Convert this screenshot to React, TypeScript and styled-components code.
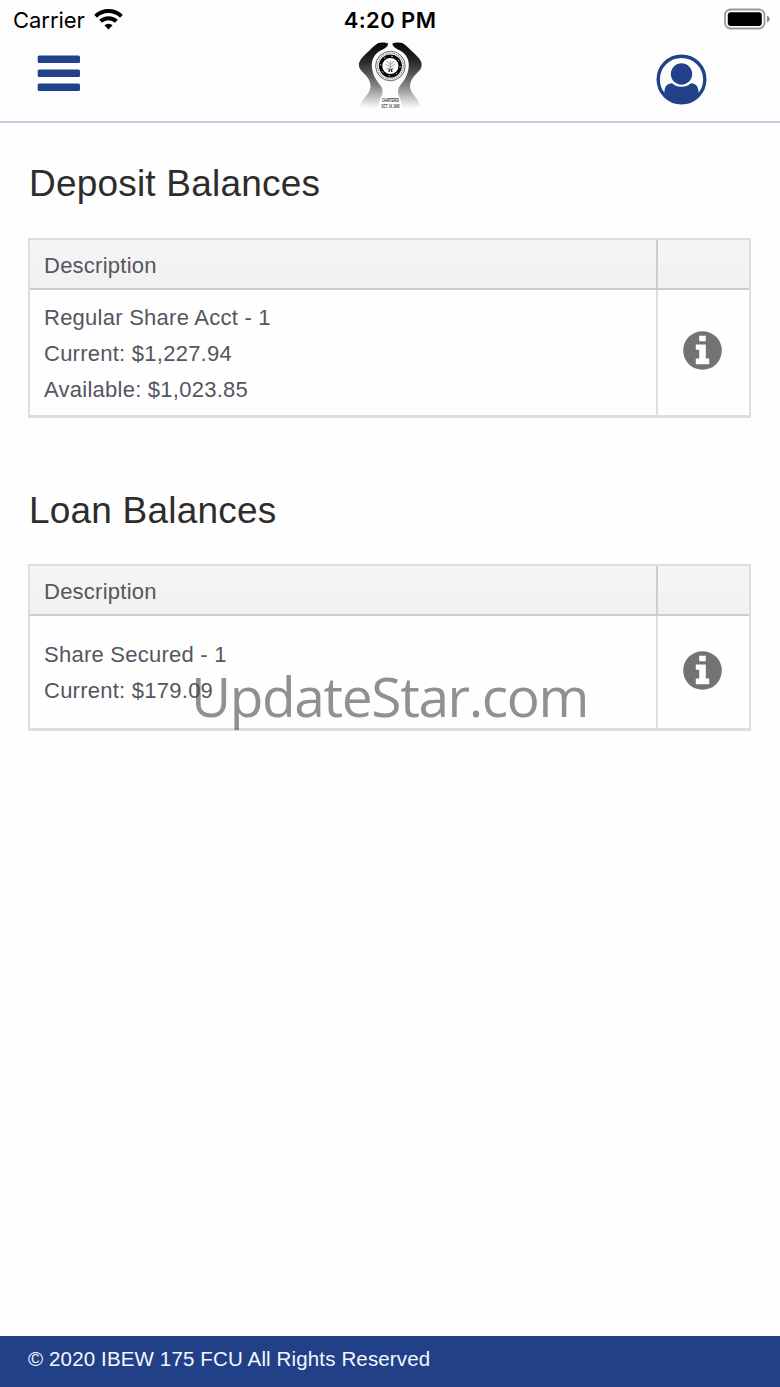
import styled, { createGlobalStyle } from 'styled-components';

const GlobalStyle = createGlobalStyle`
  * {
    box-sizing: border-box;
  }

  body {
    margin: 0;
    background: #fefefe;
    font-family: 'Liberation Sans', Arial, sans-serif;
  }
`;

const Page = styled.div`
  position: relative;
  display: flex;
  flex-direction: column;
  height: 1387px;
  overflow: hidden;
`;

const Header = styled.header`
  height: 123px;
  background: #fdfdfe;
  border-bottom: 2px solid #cbcbe0;
`;

const StatusBar = styled.div`
  display: grid;
  grid-template-columns: 1fr auto 1fr;
  align-items: center;
  height: 40px;
  padding: 0 10px 0 13px;
  font-family: Inter, 'Liberation Sans', sans-serif;
  font-size: 22px;
  color: #000;
`;

const Carrier = styled.div`
  display: flex;
  align-items: center;
  gap: 9px;
  letter-spacing: -0.05px;

  svg {
    margin-top: -2px;
  }
`;

const Time = styled.div`
  margin-right: 3px;
  font-weight: 600;
  letter-spacing: 0.4px;
`;

const BatteryIcon = styled.svg`
  justify-self: end;
  margin-top: -2px;
`;

const NavBar = styled.nav`
  display: grid;
  grid-template-columns: 1fr auto 1fr;
  align-items: start;
  padding: 0 73px 0 37px;
`;

const IconButton = styled.button`
  display: flex;
  padding: 0;
  border: 0;
  background: none;
  color: #214289;
`;

const MenuButton = styled(IconButton)`
  margin-top: 15px;
`;

const ProfileButton = styled(IconButton)`
  justify-self: end;
  margin-top: 14px;
`;

const Logo = styled.svg`
  margin-left: 36px;
`;

const Main = styled.main`
  flex: 1;
  padding: 38px 28px 0;
`;

const Title = styled.h2`
  margin: 0 0 31px;
  padding-left: 1px;
  font-size: 37px;
  font-weight: 400;
  line-height: 46px;
  letter-spacing: 0.2px;
  color: #2d2d2d;
`;

const Section = styled.section`
  height: 327px;

  & + & ${Title} {
    margin-bottom: 30px;
  }
`;

const Table = styled.div`
  width: 723px;
  border: 2px solid #dedede;
  border-bottom-width: 3px;
  font-size: 22px;
  line-height: 36px;
  letter-spacing: 0.25px;
  color: #54565f;
`;

const Row = styled.div`
  display: grid;
  grid-template-columns: 628px 1fr;
`;

const HeadRow = styled(Row)`
  height: 50px;
  background: linear-gradient(#f5f5f5, #f1f1f1);
  border-bottom: 2px solid #cdcdcd;
`;

const Cell = styled.div<{ $top: number; $bottom: number }>`
  padding: ${({ $top, $bottom }) => `${$top}px 14px ${$bottom}px`};
  border-right: 2px solid #dedede;
`;

const HeadCell = styled.div`
  padding: 8px 14px 0;
  border-right: 2px solid #cdcdcd;
`;

const InfoCell = styled.div`
  display: flex;
  align-items: center;
  justify-content: center;
  padding: 0 2px 4px 0;
  color: #737373;
`;

const Watermark = styled.div`
  position: absolute;
  top: 659px;
  left: 191px;
  font-family: 'Open Sans', 'Noto Sans', sans-serif;
  font-size: 55px;
  line-height: 74px;
  letter-spacing: -1.35px;
  white-space: nowrap;
  color: rgba(70, 70, 70, 0.6);
`;

const Footer = styled.footer`
  height: 51px;
  padding: 0 28px;
  background: #224087;
  color: #f4f7ff;
  font-size: 20.5px;
  line-height: 45px;
  letter-spacing: 0.14px;
`;

const WifiIcon = () => (
  <svg width="29" height="22" viewBox="0 0 29 22">
    <g fill="none" stroke="#000" strokeWidth="4">
      <path d="M1.6 8.2a18.6 18.6 0 0 1 25.8 0" />
      <path d="M6.6 13.3a11.5 11.5 0 0 1 15.8 0" />
    </g>
    <path d="M14.5 21.5l-4.1-4.2a6 6 0 0 1 8.2 0z" />
  </svg>
);

const InfoIcon = () => (
  <svg width="39" height="39" viewBox="0 0 39 39">
    <circle cx="19.5" cy="19.5" r="19.3" fill="currentColor" />
    <path d="M16.2 4.8h6.6v5.4h-6.6zM12.8 13.4h10v14.1h3.4v5.7H12.8v-5.7h3.4v-8.8h-3.4z" fill="#fff" />
  </svg>
);

const LogoArt = () => (
  <Logo width="70" height="70" viewBox="0 0 70 70">
    <defs>
      <linearGradient id="fade" x1="0" y1="2" x2="0" y2="68" gradientUnits="userSpaceOnUse">
        <stop offset="0" stopColor="#050505" />
        <stop offset="0.3" stopColor="#2a2a2a" />
        <stop offset="0.65" stopColor="#808080" />
        <stop offset="1" stopColor="#fdfdfe" />
      </linearGradient>
      <path
        id="hand"
        d="M33.3 3.6C31 2.3 26 2 23.3 3C20 4.5 17.5 7.5 15 10C11.5 13 9 15.5 6.7 18.3C3.5 22 3 25.5 5 29C7.500 32.500 11.500 35 13.800 39.500C16.500 45 16 49 12.500 54C9 58.500 5.500 62 5 69H24.300C23.500 64 24 61 26 57.500C28.500 53 28 49 25.500 45.500C22 41 19 37 17.700 31.700C16.500 27 16.500 22.500 17.700 19.500C19.500 14.500 23 11.500 28.300 9.300C31 8 33 6 33.300 3.600Z"
      />
    </defs>
    <use href="#hand" fill="url(#fade)" />
    <use href="#hand" fill="url(#fade)" transform="translate(70.6 0) scale(-1 1)" />
    <circle cx="35.4" cy="26" r="16" fill="#fdfdfe" />
    <circle cx="35.4" cy="26" r="14.8" fill="none" stroke="#444" strokeWidth="0.8" />
    <circle cx="35.4" cy="26" r="12.9" fill="none" stroke="#888" strokeWidth="1.4" strokeDasharray="1.2 1" />
    <circle cx="35.4" cy="26" r="9.8" fill="none" stroke="#080808" strokeWidth="3.4" />
    <circle cx="35.4" cy="26" r="9.8" fill="none" stroke="#ddd" strokeWidth="1" strokeDasharray="1.5 6.3" />
    <path
      d="M35.4 31V21M35.4 27l-5-3M35.4 27l5-3M35.4 25l-3.5-4M35.4 25l3.5-4M31 28l4 1 4-1"
      fill="none"
      stroke="#999"
      strokeWidth="0.9"
    />
    <path d="M33.5 29h1.4v3h-1.4zM36 29h1.4v3H36z" fill="#333" />
    <g fontFamily="Liberation Sans, sans-serif" fontSize="5" fontWeight="700" fill="#333" textAnchor="middle">
      <text x="35.5" y="61.5" textLength="17" lengthAdjust="spacingAndGlyphs">CHARTERED</text>
      <text x="35.5" y="67.5" textLength="18" lengthAdjust="spacingAndGlyphs">OCT. 14, 1960</text>
    </g>
  </Logo>
);

const sections = [
  {
    title: 'Deposit Balances',
    lines: ['Regular Share Acct - 1', 'Current: $1,227.94', 'Available: $1,023.85'],
    top: 10,
    bottom: 7,
  },
  {
    title: 'Loan Balances',
    lines: ['Share Secured - 1', 'Current: $179.09'],
    top: 21,
    bottom: 19,
  },
];

const App = () => {
  return (
    <>
      <GlobalStyle />
      <Page>
        <Header>
          <StatusBar>
            <Carrier>
              Carrier
              <WifiIcon />
            </Carrier>
            <Time>4:20 PM</Time>
            <BatteryIcon width="46" height="22" viewBox="0 0 46 22">
              <rect x="1" y="1.5" width="39.5" height="19" rx="5.5" fill="none" stroke="#999" strokeWidth="1.8" />
              <rect x="3.8" y="4.2" width="34" height="13.8" rx="3" />
              <path d="M43 7.8q2.8 1 2.8 3.3T43 14.5z" fill="#888" />
            </BatteryIcon>
          </StatusBar>
          <NavBar>
            <MenuButton aria-label="Menu">
              <svg width="44" height="37" viewBox="0 0 44 37" fill="currentColor">
                <rect x="0.7" y="0.5" width="42.3" height="7.5" rx="1.5" />
                <rect x="0.7" y="14.5" width="42.3" height="7.5" rx="1.5" />
                <rect x="0.7" y="28.5" width="42.3" height="7.5" rx="1.5" />
              </svg>
            </MenuButton>
            <LogoArt />
            <ProfileButton aria-label="Profile">
              <svg width="51" height="51" viewBox="0 0 51 51">
                <circle cx="25.5" cy="25.5" r="23.3" fill="none" stroke="currentColor" strokeWidth="3.4" />
                <circle cx="25.5" cy="20" r="10.7" fill="currentColor" />
                <path
                  d="M8.5 38C8.5 32 12 29.3 16 29.3C21 34 30 34 35 29.3C39 29.3 42.5 32 42.5 38L44 41C39 46 33 49 25.5 49S12 46 7 41Z"
                  fill="currentColor"
                />
              </svg>
            </ProfileButton>
          </NavBar>
        </Header>

        <Main>
          {sections.map(({ title, lines, top, bottom }) => (
            <Section key={title}>
              <Title>{title}</Title>
              <Table>
                <HeadRow>
                  <HeadCell>Description</HeadCell>
                </HeadRow>
                <Row>
                  <Cell $top={top} $bottom={bottom}>
                    {lines.map((line) => (
                      <div key={line}>{line}</div>
                    ))}
                  </Cell>
                  <InfoCell>
                    <InfoIcon />
                  </InfoCell>
                </Row>
              </Table>
            </Section>
          ))}
        </Main>

        <Footer>© 2020 IBEW 175 FCU All Rights Reserved</Footer>
        <Watermark>UpdateStar.com</Watermark>
      </Page>
    </>
  );
};

export default App;
